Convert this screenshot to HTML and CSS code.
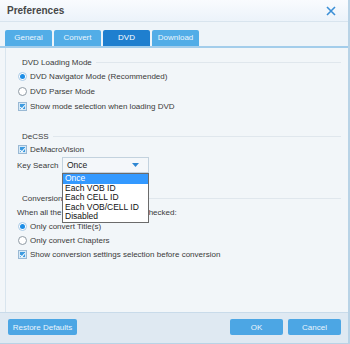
FILE: index.html
```html
<!DOCTYPE html>
<html lang="en">
<head>
    <meta charset="UTF-8">
    <title>Preferences</title>
    <link rel="stylesheet" href="styles.css">
</head>
<body>

<div class="window">
    <!-- Title bar -->
    <div class="titlebar">
        <div class="title">Preferences</div>
        <svg class="close" width="10" height="10" viewBox="0 0 10 10">
            <path d="M1 1 L9 9 M9 1 L1 9" stroke="#3b8fd6" stroke-width="1.6" fill="none"/>
        </svg>
    </div>

    <!-- Tabs -->
    <div class="tabs">
        <div class="tab">General</div>
        <div class="tab">Convert</div>
        <div class="tab active">DVD</div>
        <div class="tab">Download</div>
    </div>

    <!-- Main panel -->
    <div class="panel">
        <div class="group-head"><span>DVD Loading Mode</span><div class="rule"></div></div>
        <div class="row"><span class="radio on"></span>DVD Navigator Mode (Recommended)</div>
        <div class="row"><span class="radio"></span>DVD Parser Mode</div>
        <div class="row"><span class="check"></span>Show mode selection when loading DVD</div>

        <div class="group-head decss"><span>DeCSS</span><div class="rule"></div></div>
        <div class="row"><span class="check"></span>DeMacroVision</div>
        <div class="row key-row">
            <span class="key-label">Key Search</span>
            <div class="select">
                <span>Once</span>
                <svg width="7" height="4" viewBox="0 0 7 4"><path d="M0 0 L7 0 L3.5 4 Z" fill="#2d86d2"/></svg>
                <div class="dropdown">
                    <div class="opt selected">Once</div>
                    <div class="opt">Each VOB ID</div>
                    <div class="opt">Each CELL ID</div>
                    <div class="opt">Each VOB/CELL ID</div>
                    <div class="opt">Disabled</div>
                </div>
            </div>
        </div>

        <div class="group-head conv"><span>Conversion</span><div class="rule"></div></div>
        <div class="row tight plain">When all the titles and chapters are checked:</div>
        <div class="row tight"><span class="radio on"></span>Only convert Title(s)</div>
        <div class="row tight"><span class="radio"></span>Only convert Chapters</div>
        <div class="row tight"><span class="check"></span>Show conversion settings selection before conversion</div>
    </div>

    <!-- Footer -->
    <div class="footer">
        <button class="btn restore">Restore Defaults</button>
        <div class="footer-right">
            <button class="btn">OK</button>
            <button class="btn">Cancel</button>
        </div>
    </div>
</div>

</body>
</html>
```

FILE: styles.css
```css
* {
    margin: 0;
    padding: 0;
    box-sizing: border-box;
    font-family: 'Liberation Sans', Arial, sans-serif;
}

body {
    width: 350px;
    height: 344px;
    background-color: #f2f6f9;
    color: #3a3a3a;
    font-size: 8px;
    overflow: hidden;
}

.window {
    width: 350px;
    height: 344px;
    display: flex;
    flex-direction: column;
    border-right: 2px solid #b9d3e6;
    border-bottom: 1px solid #b9d3e6;
}

.titlebar {
    height: 22px;
    display: flex;
    justify-content: space-between;
    align-items: center;
    padding: 0 12px 0 7px;
    background: linear-gradient(#f9fbfe, #ecf3fa);
    border-bottom: 1px solid #d8e4ee;
}

.title {
    font-size: 10px;
    font-weight: bold;
    color: #474747;
}

.tabs {
    display: flex;
    gap: 2px;
    padding: 8px 5px 0;
    height: 26px;
    border-bottom: 2px solid #a3cdeb;
    background-color: #eef4f9;
}

.tab {
    width: 47px;
    height: 16px;
    line-height: 16px;
    text-align: center;
    color: #eaf5fd;
    background-color: #52ade7;
    border-radius: 2px 2px 0 0;
}

.tab.active {
    background-color: #1f7fcf;
    color: #fff;
}

.panel {
    flex: 1;
    padding: 7px 7px 0 11px;
    background-color: #f2f6f9;
    border-left: 1px solid #d9e5ee;
    margin-left: 5px;
}

.group-head {
    display: flex;
    align-items: center;
    height: 14px;
    padding-left: 5px;
    color: #3a3a3a;
}

.group-head .rule {
    flex: 1;
    height: 1px;
    background-color: #e0e7ed;
    margin-left: 4px;
}

.group-head.decss {
    margin-top: 16px;
    height: 12px;
}

.group-head.conv {
    margin-top: 18px;
}

.row {
    display: flex;
    align-items: center;
    height: 15px;
    gap: 3px;
}

.row.tight {
    height: 14px;
}

.radio {
    width: 9px;
    height: 9px;
    border-radius: 50%;
    border: 1px solid #8f9aa4;
    background-color: #fff;
    display: inline-flex;
    align-items: center;
    justify-content: center;
    margin-left: 1px;
}

.radio.on {
    border-color: #a7c9e6;
}

.radio.on::after {
    content: "";
    width: 5px;
    height: 5px;
    border-radius: 50%;
    background-color: #1b8de6;
}

.check {
    position: relative;
    width: 9px;
    height: 9px;
    margin-left: 1px;
    border: 1px solid #9ab9d4;
    background-color: #3d9be0;
    box-shadow: inset 0 0 0 1px #d6e9f7;
}

.check::after {
    content: "";
    position: absolute;
    left: 2px;
    top: 1px;
    width: 2px;
    height: 4px;
    border-right: 1px solid #fff;
    border-bottom: 1px solid #fff;
    transform: rotate(40deg);
}

.key-row {
    height: 16px;
    gap: 0;
}

.key-label {
    width: 45px;
}

.select {
    position: relative;
    width: 87px;
    height: 16px;
    display: flex;
    justify-content: space-between;
    align-items: center;
    padding: 0 9px 0 4px;
    border: 1px solid #c3d2de;
    background-color: #f4f7fa;
    font-size: 8.5px;
    color: #222;
}

.dropdown {
    position: absolute;
    left: -1px;
    top: 15px;
    width: 87px;
    background-color: #fff;
    border: 1px solid #6b6b6b;
    z-index: 2;
}

.opt {
    height: 9.6px;
    line-height: 9.6px;
    padding-left: 2px;
    color: #111;
}

.opt.selected {
    background-color: #3399ff;
    color: #fff;
}

.footer {
    height: 31px;
    display: flex;
    justify-content: space-between;
    align-items: center;
    padding: 0 7px 2px 8px;
    background-color: #dfe9f2;
    border-top: 1px solid #c9dbea;
}

.footer-right {
    display: flex;
    gap: 5px;
}

.btn {
    width: 53px;
    height: 16px;
    border: none;
    border-radius: 2px;
    background-color: #4ca6e4;
    color: #eaf5fd;
    font-size: 8px;
}

.btn.restore {
    width: 69px;
}
```
